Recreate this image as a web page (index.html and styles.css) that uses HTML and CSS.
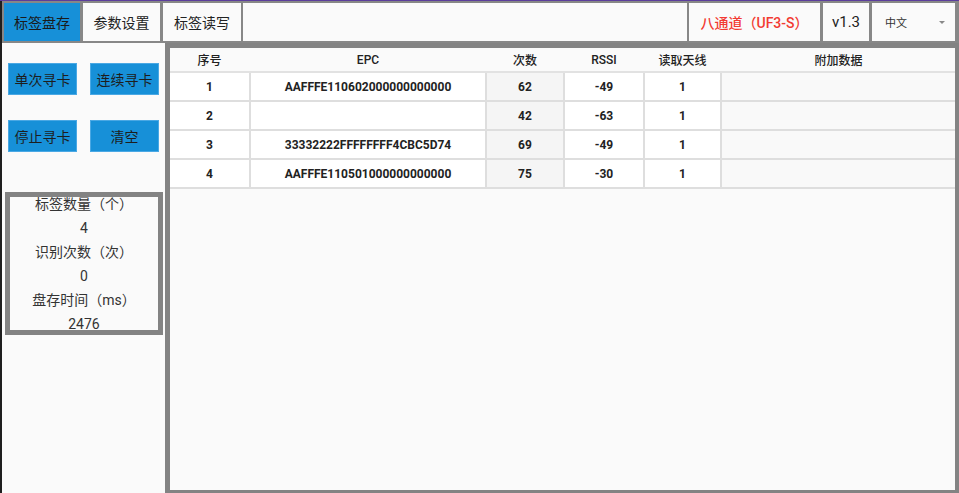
FILE: index.html
```html
<!DOCTYPE html>
<html lang="zh">
<head>
<meta charset="utf-8">
<title>标签盘存</title>
<link rel="stylesheet" href="styles.css">
</head>
<body>
<div class="app">
  <div class="topbar">
    <div class="tab tab-active">标签盘存</div>
    <div class="tab tab-2">参数设置</div>
    <div class="tab tab-3">标签读写</div>
    <div class="tab tab-blank"></div>
    <div class="tab tab-model">八通道（UF3-S）</div>
    <div class="tab tab-ver">v1.3</div>
    <div class="tab tab-lang"><span class="lang-text">中文</span><span class="caret"></span></div>
  </div>
  <div class="content">
    <div class="side">
      <div class="btn-grid">
        <div class="btn">单次寻卡</div>
        <div class="btn">连续寻卡</div>
        <div class="btn">停止寻卡</div>
        <div class="btn">清空</div>
      </div>
      <div class="stats">
        <div class="stats-inner">
          <div class="stat-line">标签数量（个）</div>
          <div class="stat-line">4</div>
          <div class="stat-line">识别次数（次）</div>
          <div class="stat-line">0</div>
          <div class="stat-line">盘存时间（ms）</div>
          <div class="stat-line">2476</div>
        </div>
      </div>
    </div>
    <div class="table-frame">
      <div class="table-head">
        <div class="th">序号</div>
        <div class="th">EPC</div>
        <div class="th">次数</div>
        <div class="th">RSSI</div>
        <div class="th">读取天线</div>
        <div class="th">附加数据</div>
      </div>
      <div class="table-body">
        <div class="td">1</div><div class="td">AAFFFE110602000000000000</div><div class="td td-gray">62</div><div class="td">-49</div><div class="td">1</div><div class="td td-light"></div>
        <div class="td">2</div><div class="td"></div><div class="td td-gray">42</div><div class="td">-63</div><div class="td">1</div><div class="td td-light"></div>
        <div class="td">3</div><div class="td">33332222FFFFFFFF4CBC5D74</div><div class="td td-gray">69</div><div class="td">-49</div><div class="td">1</div><div class="td td-light"></div>
        <div class="td">4</div><div class="td">AAFFFE110501000000000000</div><div class="td td-gray">75</div><div class="td">-30</div><div class="td">1</div><div class="td td-light"></div>
      </div>
    </div>
  </div>
</div>
</body>
</html>
```

FILE: styles.css
```css
* { box-sizing: border-box; }
html, body { margin: 0; padding: 0; }
body {
  width: 959px;
  height: 493px;
  overflow: hidden;
  background: #1e1e1e;
  font-family: "Roboto", "Noto Sans CJK SC", sans-serif;
  color: #222;
}
.app {
  width: 959px;
  height: 493px;
  border-top: 1px solid #5b3d9c;
  padding-left: 2px;
  display: flex;
  flex-direction: column;
}
.topbar {
  height: 42px;
  background: #878787;
  display: flex;
  gap: 3px;
  padding: 2px 4px 2px 2px;
  flex: none;
}
.tab {
  height: 38px;
  background: #fafafa;
  display: flex;
  align-items: center;
  justify-content: center;
  font-size: 14px;
  color: #222;
}
.tab-active { width: 76px; background: #1790d8; color: #1a1a1a; }
.tab-2 { width: 77px; }
.tab-3 { width: 78px; margin-right: -1px; }
.tab-blank { flex: 1; margin-right: -1px; }
.tab-model { width: 131px; color: #f23a32; font-size: 14px; font-weight: 500; }
.tab-ver { width: 46px; font-size: 15px; }
.tab-lang { width: 83px; justify-content: flex-start; padding-left: 13px; }
.lang-text { font-size: 11px; color: #333; }
.caret {
  margin-left: 32px;
  width: 0; height: 0;
  border-left: 3px solid transparent;
  border-right: 3px solid transparent;
  border-top: 3px solid #888;
}
.content {
  flex: 1;
  display: flex;
  min-height: 0;
}
.side {
  width: 163px;
  background: #fafafa;
  padding: 20px 2px 0 3px;
  flex: none;
}
.btn-grid {
  display: grid;
  grid-template-columns: 69px 69px;
  column-gap: 13px;
  row-gap: 25px;
  padding-left: 3px;
}
.btn {
  height: 32px;
  background: #1790d8;
  border: 1px solid #4aa8e4;
  display: flex;
  align-items: center;
  justify-content: center;
  font-size: 14px;
  color: #1d1d1d;
}
.stats {
  margin-top: 40px;
  width: 158px;
  height: 143px;
  border: 5px solid #838383;
  background: #fafafa;
  overflow: hidden;
}
.stats-inner {
  margin-top: -5px;
  text-align: center;
}
.stat-line {
  height: 24px;
  line-height: 24px;
  font-size: 14px;
  color: #333;
}
.table-frame {
  flex: 1;
  background: #fafafa;
  border-style: solid;
  border-color: #838383;
  border-width: 5px 4px 3px 5px;
  display: flex;
  flex-direction: column;
}
.table-head, .table-body {
  display: grid;
  grid-template-columns: 79px 234px 76px 78px 75px 1fr;
  column-gap: 2px;
}
.table-head {
  height: 23px;
  border-bottom: 2px solid #e2e2e2;
  box-sizing: content-box;
}
.th {
  display: flex;
  align-items: center;
  justify-content: center;
  font-size: 12px;
  font-weight: 500;
  color: #222;
}
.table-body {
  background: #dedede;
  row-gap: 2px;
  padding-bottom: 2px;
}
.td {
  height: 27px;
  background: #ffffff;
  display: flex;
  align-items: center;
  justify-content: center;
  font-size: 12px;
  font-weight: 700;
  color: #222;
}
.td-gray { background: #f5f5f5; }
.td-light { background: #f9f9f9; }
```
